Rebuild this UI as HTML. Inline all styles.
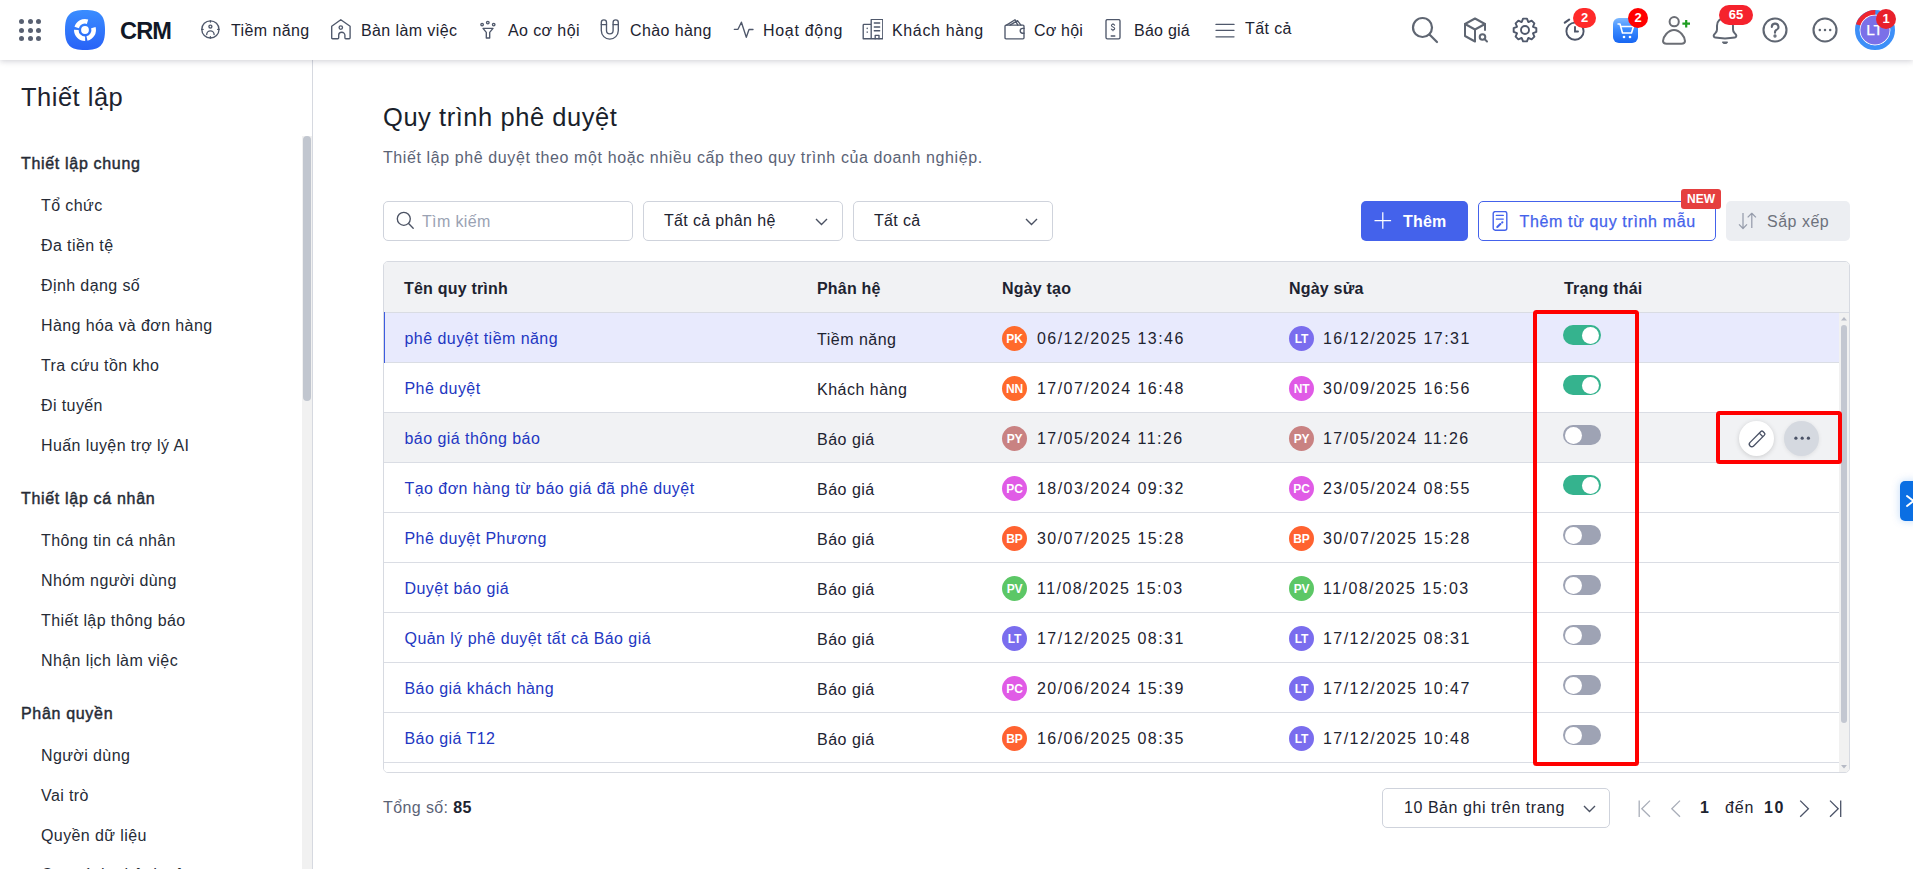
<!DOCTYPE html>
<html><head><meta charset="utf-8">
<style>
*{box-sizing:border-box;margin:0;padding:0}
html,body{width:1913px;height:869px;overflow:hidden;background:#fff;font-family:"Liberation Sans",sans-serif;color:#1d2330}
.abs{position:absolute}
#hdr{position:absolute;left:0;top:0;width:1913px;height:60px;background:#fff;z-index:5;box-shadow:0 1px 6px rgba(20,20,45,.21)}
.dot{position:absolute;width:5px;height:5px;border-radius:50%;background:#586071}
.nav{position:absolute;top:0;height:60px;line-height:60px;font-size:16px;letter-spacing:.4px;color:#1d2330;white-space:nowrap}
.nav svg{position:absolute;top:19px;left:0}
.nav span{position:absolute;left:30px;top:1px}
.ri{position:absolute}
.badge{position:absolute;background:#f5222d;color:#fff;font-weight:700;font-size:13px;text-align:center;border-radius:10px;height:20px;line-height:20px}
#side{position:absolute;left:0;top:60px;width:313px;height:809px;border-right:1px solid #d6d9e0;background:#fff}
.sh{position:absolute;left:21px;margin-top:1px;font-size:16px;font-weight:400;-webkit-text-stroke:.45px #262b36;color:#262b36;white-space:nowrap;letter-spacing:.68px}
.si{position:absolute;left:41px;margin-top:1px;font-size:16px;color:#262b36;white-space:nowrap;letter-spacing:.4px}
.t{position:absolute;white-space:nowrap}

.row{position:absolute;left:0;width:1455px;height:50px;border-bottom:1px solid #dadde4}
.selbar{position:absolute;left:-1px;top:-1px;width:2px;height:51px;background:#3d5ce0}
.cn{position:absolute;left:20.5px;top:1px;line-height:50px;font-size:16px;color:#2337c2;letter-spacing:.45px;white-space:nowrap}
.cm{position:absolute;left:433px;top:1.5px;line-height:50px;font-size:16px;color:#1d2330;letter-spacing:.5px;white-space:nowrap}
.cd{position:absolute;top:1px;line-height:50px;font-size:16px;color:#1d2330;letter-spacing:1.45px;white-space:nowrap}
.av{position:absolute;top:13px;width:25px;height:25px;border-radius:50%;color:#fff;font-size:12px;font-weight:700;text-align:center;line-height:26.5px;letter-spacing:-.2px}
.tg{position:absolute;left:1179px;top:12px;width:38px;height:20px;border-radius:10px;background:#9ea3b4}
.tg i{position:absolute;left:2px;top:1.5px;width:17px;height:17px;border-radius:50%;background:#fff}
.tg.on{background:#35b38e}
.tg.on i{left:19px}
.abtn{position:absolute;top:8px;width:35px;height:35px;border-radius:50%;}
.abtn svg{position:absolute}
.th{position:absolute;top:1.5px;line-height:50px;font-size:16px;font-weight:700;color:#1d2330;white-space:nowrap;letter-spacing:.2px}
</style></head><body>
<div id="hdr">
  <!-- dots -->
  <div class="dot" style="left:19px;top:19px"></div><div class="dot" style="left:27.5px;top:19px"></div><div class="dot" style="left:36px;top:19px"></div>
  <div class="dot" style="left:19px;top:27.5px"></div><div class="dot" style="left:27.5px;top:27.5px"></div><div class="dot" style="left:36px;top:27.5px"></div>
  <div class="dot" style="left:19px;top:36px"></div><div class="dot" style="left:27.5px;top:36px"></div><div class="dot" style="left:36px;top:36px"></div>
  <!-- logo -->
  <svg class="abs" style="left:65px;top:10px" width="40" height="40" viewBox="0 0 40 40">
    <defs><linearGradient id="lg" x1="0" y1="0" x2="0" y2="1"><stop offset="0" stop-color="#3a8dff"/><stop offset="1" stop-color="#2862f7"/></linearGradient></defs>
    <path d="M20 0C35 0 40 5 40 20S35 40 20 40 0 35 0 20 5 0 20 0Z" fill="url(#lg)"/>
    <circle cx="20" cy="20" r="3.9" fill="#fff"/>
    <path d="M9.48 16.78A11.0 11.0 0 0 1 23.22 9.48L21.87 13.88A6.4 6.4 0 0 0 13.88 18.13ZM20.19 31.00A11.0 11.0 0 0 1 9.00 19.81L13.60 19.89A6.4 6.4 0 0 0 20.11 26.40ZM30.57 16.97A11.0 11.0 0 0 1 22.47 30.72L21.44 26.24A6.4 6.4 0 0 0 26.15 18.24Z" fill="#fff"/>
  </svg>
  <div class="t" style="left:120px;top:17px;font-size:23.6px;font-weight:700;color:#111827;line-height:28px;letter-spacing:-.9px">CRM</div>

  <!-- nav -->
  <div class="nav" style="left:201px"><svg width="20" height="21" viewBox="0 0 20 21" fill="none" stroke="#4f586b" stroke-width="1.35" stroke-linejoin="round" stroke-linecap="round"><circle cx="9.4" cy="10.4" r="8.6"/><circle cx="9.4" cy="7.6" r="1.5"/><path d="M5.7 15.6a3.7 3.7 0 0 1 7.4 0"/><path d="M9.4 1.8v1.3M9.4 17.7v1.3M.8 10.4h1.3M16.7 10.4h1.3"/></svg><span>Tiềm năng</span></div>
  <div class="nav" style="left:331px"><svg width="21" height="21" viewBox="0 0 21 21" fill="none" stroke="#4f586b" stroke-width="1.35" stroke-linejoin="round" stroke-linecap="round"><path d="M.7 7.3L9.8.7l9.3 6.6v11.5c0 .6-.3.9-.9.9h-3.4c-.6 0-.9-.3-.9-.9v-2.5a3.1 3.1 0 0 0-6.2 0v2.5c0 .6-.3.9-.9.9H1.6c-.6 0-.9-.3-.9-.9z"/><circle cx="9.8" cy="8.6" r="1.7"/></svg><span>Bàn làm việc</span></div>
  <div class="nav" style="left:478px"><svg width="20" height="21" viewBox="0 0 20 21" fill="none" stroke="#4f586b" stroke-width="1.35" stroke-linejoin="round" stroke-linecap="round"><circle cx="4.1" cy="5.6" r="1.25"/><circle cx="9.8" cy="3.6" r="1.3"/><circle cx="15.7" cy="5.6" r="1.25"/><path d="M5 9.4h10l-3.3 4v5.6h-3.4v-5.6z"/></svg><span>Ao cơ hội</span></div>
  <div class="nav" style="left:600px"><svg width="20" height="21" viewBox="0 0 20 21" fill="none" stroke="#4f586b" stroke-width="1.35" stroke-linejoin="round" stroke-linecap="round"><path d="M1.3 3.4a2.6 2.6 0 0 1 5.2 0v8.2a3.3 3.3 0 0 0 6.6 0V3.4a2.6 2.6 0 0 1 5.2 0v8.2a8.5 8.5 0 0 1-17 0z"/><path d="M1.3 5.6h5.2M13.1 5.6h5.2"/></svg><span>Chào hàng</span></div>
  <div class="nav" style="left:733px"><svg width="21" height="21" viewBox="0 0 21 21" fill="none" stroke="#4f586b" stroke-width="1.35" stroke-linejoin="round" stroke-linecap="round"><path d="M1.3 10.3H5L8.4 3.2l4.9 15.1 2.7-7.8h4"/></svg><span style="letter-spacing:.7px;">Hoạt động</span></div>
  <div class="nav" style="left:862px"><svg width="21" height="21" viewBox="0 0 21 21" fill="none" stroke="#4f586b" stroke-width="1.35" stroke-linejoin="round" stroke-linecap="round"><path d="M9.2 19.7V5.4H2c-.5 0-.8.3-.8.8v13.5zM9.2 19.7V1c0-.5.3-.8.8-.8h10c.5 0 .8.3.8.8v18.7zM1.2 19.7h19.6"/><path d="M12.3 4h5.4M12.3 8h5.4M12.3 11.7h5.4M5.2 9.2v.4M5.2 12.9v.4M13.2 19.7v-3.4h3.8v3.4"/></svg><span style="letter-spacing:.65px;">Khách hàng</span></div>
  <div class="nav" style="left:1004px"><svg width="21" height="21" viewBox="0 0 21 21" fill="none" stroke="#4f586b" stroke-width="1.35" stroke-linejoin="round" stroke-linecap="round"><path d="M1 7.2c0-.7.4-1.1 1.1-1.1h16.8c.7 0 1.1.4 1.1 1.1v11.5c0 .7-.4 1.1-1.1 1.1H2.1c-.7 0-1.1-.4-1.1-1.1z"/><path d="M2.5 6.1L11 .7l2.8 5.4M6 6.1l7.5-4.4 3.4 4.4"/><path d="M20 9.4h-1.4a2.2 2.2 0 0 0 0 4.8H20"/></svg><span style="letter-spacing:.2px;">Cơ hội</span></div>
  <div class="nav" style="left:1104px"><svg width="20" height="21" viewBox="0 0 20 21" fill="none" stroke="#4f586b" stroke-width="1.35" stroke-linejoin="round" stroke-linecap="round"><rect x="2" y=".6" width="14" height="19.2" rx="1.4"/><path d="M7.2 17h3.6"/><path d="M10.6 6.2c-.3-.6-.9-.9-1.6-.9-.9 0-1.6.5-1.6 1.3 0 1.8 3.3 1 3.3 3 0 .8-.7 1.3-1.7 1.3-.7 0-1.4-.3-1.7-.9M9 4.5v.8M9 11v.8" stroke-width="1.1"/></svg><span style="letter-spacing:.25px;">Báo giá</span></div>
  <div class="nav" style="left:1215px"><svg width="20" height="21" viewBox="0 0 20 21" fill="none" stroke="#4f586b" stroke-width="1.35" stroke-linejoin="round" stroke-linecap="round"><path d="M1 5.4h18M1 11.3h18M1 17.8h18"/></svg><span style="letter-spacing:.4px;top:-1px;">Tất cả</span></div>

  <!-- right icons -->
  <svg class="ri" style="left:1411px;top:16px" width="28" height="28" viewBox="0 0 28 28" fill="none" stroke="#5f6672" stroke-width="2.2" stroke-linecap="round"><circle cx="11.5" cy="11.5" r="9.5"/><path d="M18.5 18.5l7.5 7.5"/></svg>
  <svg class="ri" style="left:1462px;top:16px" width="28" height="28" viewBox="0 0 28 28" fill="none" stroke="#5f6672" stroke-width="2" stroke-linejoin="round" stroke-linecap="round"><path d="M23 14V8L13 2.5 3 8v12l10 5.5"/><path d="M3 8l10 5.5L23 8M13 13.5V25"/><circle cx="20.5" cy="21" r="2.8"/><path d="M22.5 23l2.5 2.5"/></svg>
  <svg class="ri" style="left:1511px;top:16px" width="28" height="28" viewBox="0 0 28 28" fill="none" stroke="#4f586b" stroke-width="1.9" stroke-linejoin="round"><path d="M10.77 5.92 L12.05 2.67 L15.95 2.67 L17.23 5.92 L17.43 6.01 L20.64 4.61 L23.39 7.36 L21.99 10.57 L22.08 10.77 L25.33 12.05 L25.33 15.95 L22.08 17.23 L21.99 17.43 L23.39 20.64 L20.64 23.39 L17.43 21.99 L17.23 22.08 L15.95 25.33 L12.05 25.33 L10.77 22.08 L10.57 21.99 L7.36 23.39 L4.61 20.64 L6.01 17.43 L5.92 17.23 L2.67 15.95 L2.67 12.05 L5.92 10.77 L6.01 10.57 L4.61 7.36 L7.36 4.61 L10.57 6.01Z"/><circle cx="14" cy="14" r="4"/></svg>
  <svg class="ri" style="left:1561px;top:16px" width="28" height="28" viewBox="0 0 28 28" fill="none" stroke="#4d5568" stroke-width="1.9" stroke-linecap="round"><circle cx="14" cy="15.2" r="8.6"/><path d="M14 10.9v4.6h3"/><path d="M3.8 6.6l4.3-2.9" stroke-width="2.2"/></svg>
  <div class="badge" style="left:1573px;top:8px;width:23px;background:#ff2a2a">2</div>
  <svg class="ri" style="left:1613px;top:18px" width="25" height="25" viewBox="0 0 25 25"><defs><linearGradient id="cg" x1="0" y1="0" x2="0" y2="1"><stop offset="0" stop-color="#7db8ff"/><stop offset=".45" stop-color="#3b8bff"/><stop offset="1" stop-color="#1766f2"/></linearGradient></defs><rect width="25" height="25" rx="6" fill="url(#cg)"/><path d="M4.5 6h2.5l2.5 9h9l2-6.5H8" fill="none" stroke="#fff" stroke-width="1.6" stroke-linejoin="round"/><circle cx="11" cy="19" r="1.3" fill="#fff"/><circle cx="17" cy="19" r="1.3" fill="#fff"/></svg>
  <div class="badge" style="left:1628px;top:8px;width:20px;background:#f00">2</div>
  <svg class="ri" style="left:1660px;top:15px" width="32" height="30" viewBox="0 0 32 30" fill="none" stroke="#6b6e75" stroke-width="2"><circle cx="14.2" cy="6.7" r="4.6"/><path d="M3 26c0-4 5-11 11-11s11 7 11 11c0 1.7-1.2 2.7-3.5 2.7h-15C4.2 28.7 3 27.7 3 26z" stroke-linejoin="round"/><path d="M26.2 5v7.5M22.4 8.7h7.6" stroke="#1f9d22" stroke-width="2.2"/></svg>
  <svg class="ri" style="left:1711px;top:15px" width="28" height="30" viewBox="0 0 28 30" fill="none" stroke="#5f6672" stroke-width="2" stroke-linejoin="round"><path d="M14 3.2c-5 0-8 3-8 7.6v3.8c0 1.3-.5 2.3-1.4 3.3l-1.5 1.7c-.9 1.1-.3 2.7 1.2 3 2.6.5 6 .8 9.7.8s7.1-.3 9.7-.8c1.5-.3 2.1-1.9 1.2-3l-1.5-1.7c-.9-1-1.4-2-1.4-3.3v-3.8c0-4.6-3-7.6-8-7.6z"/><path d="M11.6 27.2c.5.9 1.3 1.3 2.4 1.3s1.9-.4 2.4-1.3z" fill="#5f6672" stroke-width="1.2"/></svg>
  <div class="badge" style="left:1719px;top:5px;width:34px;font-size:13px">65</div>
  <svg class="ri" style="left:1761px;top:16px" width="28" height="28" viewBox="0 0 28 28" fill="none" stroke="#5f6672" stroke-width="2.1" stroke-linecap="round"><circle cx="14" cy="14" r="11.5"/><path d="M10.8 11a3.3 3.3 0 1 1 4.5 3c-1 .5-1.3 1-1.3 2v.8"/><circle cx="14" cy="20" r=".6" fill="#5f6672"/></svg>
  <svg class="ri" style="left:1811px;top:16px" width="28" height="28" viewBox="0 0 28 28" fill="none" stroke="#5f6672" stroke-width="2.1"><circle cx="14" cy="14" r="11.5"/><circle cx="8.8" cy="14" r="1.25" fill="#5f6672" stroke="none"/><circle cx="14" cy="14" r="1.25" fill="#5f6672" stroke="none"/><circle cx="19.2" cy="14" r="1.25" fill="#5f6672" stroke="none"/></svg>
  <svg class="ri" style="left:1855px;top:10px" width="40" height="40" viewBox="0 0 40 40"><circle cx="20" cy="20" r="17.6" fill="none" stroke="#3d8ff8" stroke-width="4.8"/><path d="M3.26 14.88A17.5 17.5 0 0 1 20.31 2.50" fill="none" stroke="#ee2631" stroke-width="4.8"/><circle cx="20" cy="20" r="15.3" fill="#fff"/><circle cx="20" cy="20" r="14.6" fill="#7b70e8"/><text x="19.6" y="25.2" font-size="15.5" fill="#fff" text-anchor="middle" font-family="Liberation Sans" letter-spacing="-.2" stroke="#fff" stroke-width=".25">LT</text></svg>
  <div class="badge" style="left:1876px;top:9px;width:20px;background:#e8202b">1</div>
</div>

<div id="side">
  <div class="t" style="left:21px;top:21px;font-size:25.5px;color:#1d2330;line-height:32px;letter-spacing:.5px">Thiết lập</div>
  <!-- scrollbar -->
  <div class="abs" style="left:302px;top:76px;width:10px;height:733px;background:#f1f1f1"></div>
  <div class="abs" style="left:303px;top:76px;width:8px;height:265px;background:#c1c6cf;border-radius:4px"></div>
  <div class="sh" style="top:93px;line-height:20px">Thiết lập chung</div>
  <div class="si" style="top:135px;line-height:20px">Tổ chức</div>
  <div class="si" style="top:175px;line-height:20px">Đa tiền tệ</div>
  <div class="si" style="top:215px;line-height:20px">Định dạng số</div>
  <div class="si" style="top:255px;line-height:20px">Hàng hóa và đơn hàng</div>
  <div class="si" style="top:295px;line-height:20px">Tra cứu tồn kho</div>
  <div class="si" style="top:335px;line-height:20px">Đi tuyến</div>
  <div class="si" style="top:375px;line-height:20px">Huấn luyện trợ lý AI</div>
  <div class="sh" style="top:428px;line-height:20px">Thiết lập cá nhân</div>
  <div class="si" style="top:470px;line-height:20px">Thông tin cá nhân</div>
  <div class="si" style="top:510px;line-height:20px">Nhóm người dùng</div>
  <div class="si" style="top:550px;line-height:20px">Thiết lập thông báo</div>
  <div class="si" style="top:590px;line-height:20px">Nhận lịch làm việc</div>
  <div class="sh" style="top:643px;line-height:20px">Phân quyền</div>
  <div class="si" style="top:685px;line-height:20px">Người dùng</div>
  <div class="si" style="top:725px;line-height:20px">Vai trò</div>
  <div class="si" style="top:765px;line-height:20px">Quyền dữ liệu</div>
  <div class="si" style="top:804px;line-height:20px">Quy trình phê duyệt</div>
</div>

<!-- MAIN -->

<div class="t" style="left:383px;top:101px;font-size:25.5px;line-height:32px;color:#1a1f2b;letter-spacing:.55px">Quy trình phê duyệt</div>
<div class="t" style="left:383px;top:148.3px;font-size:16px;line-height:20px;color:#5b6376;letter-spacing:.6px">Thiết lập phê duyệt theo một hoặc nhiều cấp theo quy trình của doanh nghiệp.</div>

<!-- search -->
<div class="abs" style="left:383px;top:201px;width:250px;height:40px;border:1px solid #cfd3dc;border-radius:5px;background:#fff">
  <svg class="abs" style="left:12px;top:9px" width="20" height="20" viewBox="0 0 20 20" fill="none" stroke="#4b5263" stroke-width="1.35" stroke-linecap="round"><circle cx="7.8" cy="7.8" r="6.5"/><path d="M12.6 12.6l4.6 4.6"/></svg>
  <div class="t" style="left:38px;top:10px;line-height:20px;font-size:16px;color:#9aa2b3;letter-spacing:.35px">Tìm kiếm</div>
</div>
<div class="abs" style="left:643px;top:201px;width:200px;height:40px;border:1px solid #cfd3dc;border-radius:5px;background:#fff">
  <div class="t" style="left:20px;top:8.6px;line-height:20px;font-size:16px;color:#1d2330;letter-spacing:.35px">Tất cả phân hệ</div>
  <svg class="abs" style="left:171px;top:16px" width="13" height="8" viewBox="0 0 13 8" fill="none" stroke="#4b5263" stroke-width="1.4"><path d="M1 1l5.5 5.5L12 1"/></svg>
</div>
<div class="abs" style="left:853px;top:201px;width:200px;height:40px;border:1px solid #cfd3dc;border-radius:5px;background:#fff">
  <div class="t" style="left:20px;top:8.6px;line-height:20px;font-size:16px;color:#1d2330;letter-spacing:.35px">Tất cả</div>
  <svg class="abs" style="left:171px;top:16px" width="13" height="8" viewBox="0 0 13 8" fill="none" stroke="#4b5263" stroke-width="1.4"><path d="M1 1l5.5 5.5L12 1"/></svg>
</div>

<!-- buttons -->
<div class="abs" style="left:1361px;top:201px;width:107px;height:40px;border-radius:5px;background:#4462eb">
  <svg class="abs" style="left:13px;top:11px" width="18" height="18" viewBox="0 0 18 18" stroke="#fff" stroke-width="1.25"><path d="M8.8 0.2v16.6M0.5 8.5h16.6"/></svg>
  <div class="t" style="left:42px;top:11px;line-height:20px;font-size:16px;font-weight:700;color:#fff;letter-spacing:.2px">Thêm</div>
</div>
<div class="abs" style="left:1478px;top:201px;width:238px;height:40px;border:1.5px solid #4462eb;border-radius:5px;background:#fff">
  <svg class="abs" style="left:13px;top:9px" width="18" height="21" viewBox="0 0 18 21" fill="none" stroke="#4462eb" stroke-width="1.4" stroke-linejoin="round" stroke-linecap="round"><rect x="1.2" y="0.6" width="13.6" height="18.6" rx="2"/><path d="M4.3 4.4h7M4.3 8.1h7" stroke-width="1.3"/><path d="M5.3 16L8.4 13" stroke-width="2.1"/><path d="M10.2 11.5l.2-.2" stroke-width="2.1"/></svg>
  <div class="t" style="left:40.5px;top:9.5px;line-height:20px;font-size:16px;color:#4462eb;letter-spacing:.64px;-webkit-text-stroke:.25px #4462eb">Thêm từ quy trình mẫu</div>
</div>
<div class="abs" style="left:1681px;top:189px;width:40px;height:20px;border-radius:3px;background:#e53f3f;color:#fff;font-size:12px;font-weight:700;text-align:center;line-height:20px">NEW</div>
<div class="abs" style="left:1726px;top:201px;width:124px;height:40px;border-radius:5px;background:#eceef2">
  <svg class="abs" style="left:12px;top:11px" width="19" height="18" viewBox="0 0 19 18" fill="none" stroke="#979dac" stroke-width="1.25" stroke-linejoin="round"><path d="M5 1v15.5M1 12.4l4 4.1 4-4.1M13.8 16V1.3M9.7 5.4l4.1-4.1 4.1 4.1"/></svg>
  <div class="t" style="left:41px;top:11px;line-height:20px;font-size:16px;color:#6e727d;letter-spacing:.5px">Sắp xếp</div>
</div>

<!-- table -->
<div class="abs" style="left:383px;top:261px;width:1467px;height:512px;border:1px solid #d7dae1;border-radius:5px;overflow:hidden;background:#fff">
  <div class="abs" style="left:0;top:0;width:1465px;height:51px;background:#f1f2f4;border-bottom:1px solid #d9dce3">
    <div class="th" style="left:20px">Tên quy trình</div>
    <div class="th" style="left:433px">Phân hệ</div>
    <div class="th" style="left:618px">Ngày tạo</div>
    <div class="th" style="left:905px">Ngày sửa</div>
    <div class="th" style="left:1180px">Trạng thái</div>
  </div>
<div class="row" style="top:51px;background:#e8eafd">
<div class="selbar"></div>
<div class="cn">phê duyệt tiềm năng</div><div class="cm">Tiềm năng</div>
<div class="av" style="left:618px;background:#ff6a2c">PK</div><div class="cd" style="left:653px">06/12/2025 13:46</div>
<div class="av" style="left:905px;background:#7a6dee">LT</div><div class="cd" style="left:939px">16/12/2025 17:31</div>
<div class="tg on"><i></i></div>
</div>
<div class="row" style="top:101px;background:#fff">
<div class="cn">Phê duyệt</div><div class="cm">Khách hàng</div>
<div class="av" style="left:618px;background:#ff6a2c">NN</div><div class="cd" style="left:653px">17/07/2024 16:48</div>
<div class="av" style="left:905px;background:#e05ae6">NT</div><div class="cd" style="left:939px">30/09/2025 16:56</div>
<div class="tg on"><i></i></div>
</div>
<div class="row" style="top:151px;background:#f1f2f4">
<div class="cn">báo giá thông báo</div><div class="cm">Báo giá</div>
<div class="av" style="left:618px;background:#c98282">PY</div><div class="cd" style="left:653px">17/05/2024 11:26</div>
<div class="av" style="left:905px;background:#c98282">PY</div><div class="cd" style="left:939px">17/05/2024 11:26</div>
<div class="tg "><i></i></div>
<div class="abtn" style="left:1355px;background:#fff;box-shadow:0 1px 5px rgba(0,0,0,.16)"><svg style="left:5.5px;top:5.5px" width="24" height="24" viewBox="0 0 24 24" fill="none" stroke="#4b5367" stroke-width="1.35" stroke-linejoin="round"><g transform="rotate(-45 12 12)"><path d="M4.7 9.5H20a1.5 1.5 0 0 1 1.5 1.5v2a1.5 1.5 0 0 1-1.5 1.5H4.7a2.5 2.5 0 0 1 0-5z"/><path d="M17.8 9.5v5"/></g></svg></div><div class="abtn" style="left:1400px;background:#d5d9e0;box-shadow:0 1px 4px rgba(0,0,0,.08)"><svg style="left:7.5px;top:7.5px" width="20" height="20" viewBox="0 0 20 20" fill="#4b5367"><circle cx="3.9" cy="9.2" r="1.6"/><circle cx="10.2" cy="9.2" r="1.6"/><circle cx="16.4" cy="9.2" r="1.6"/></svg></div>
</div>
<div class="row" style="top:201px;background:#fff">
<div class="cn">Tạo đơn hàng từ báo giá đã phê duyệt</div><div class="cm">Báo giá</div>
<div class="av" style="left:618px;background:#e05be6">PC</div><div class="cd" style="left:653px">18/03/2024 09:32</div>
<div class="av" style="left:905px;background:#e05be6">PC</div><div class="cd" style="left:939px">23/05/2024 08:55</div>
<div class="tg on"><i></i></div>
</div>
<div class="row" style="top:251px;background:#fff">
<div class="cn">Phê duyệt Phương</div><div class="cm">Báo giá</div>
<div class="av" style="left:618px;background:#ff6230">BP</div><div class="cd" style="left:653px">30/07/2025 15:28</div>
<div class="av" style="left:905px;background:#ff6230">BP</div><div class="cd" style="left:939px">30/07/2025 15:28</div>
<div class="tg "><i></i></div>
</div>
<div class="row" style="top:301px;background:#fff">
<div class="cn">Duyệt báo giá</div><div class="cm">Báo giá</div>
<div class="av" style="left:618px;background:#5cc766">PV</div><div class="cd" style="left:653px">11/08/2025 15:03</div>
<div class="av" style="left:905px;background:#5cc766">PV</div><div class="cd" style="left:939px">11/08/2025 15:03</div>
<div class="tg "><i></i></div>
</div>
<div class="row" style="top:351px;background:#fff">
<div class="cn">Quản lý phê duyệt tất cả Báo giá</div><div class="cm">Báo giá</div>
<div class="av" style="left:618px;background:#7a6dee">LT</div><div class="cd" style="left:653px">17/12/2025 08:31</div>
<div class="av" style="left:905px;background:#7a6dee">LT</div><div class="cd" style="left:939px">17/12/2025 08:31</div>
<div class="tg "><i></i></div>
</div>
<div class="row" style="top:401px;background:#fff">
<div class="cn">Báo giá khách hàng</div><div class="cm">Báo giá</div>
<div class="av" style="left:618px;background:#e05be6">PC</div><div class="cd" style="left:653px">20/06/2024 15:39</div>
<div class="av" style="left:905px;background:#7a6dee">LT</div><div class="cd" style="left:939px">17/12/2025 10:47</div>
<div class="tg "><i></i></div>
</div>
<div class="row" style="top:451px;background:#fff">
<div class="cn">Báo giá T12</div><div class="cm">Báo giá</div>
<div class="av" style="left:618px;background:#ff6230">BP</div><div class="cd" style="left:653px">16/06/2025 08:35</div>
<div class="av" style="left:905px;background:#7a6dee">LT</div><div class="cd" style="left:939px">17/12/2025 10:48</div>
<div class="tg "><i></i></div>
</div>
<div class="row" style="top:501px;background:#fff">
<div class="cn">Báo giá mới</div><div class="cm">Báo giá</div>
<div class="av" style="left:618px;background:#7a6dee">LT</div><div class="cd" style="left:653px">17/12/2025 10:50</div>
<div class="av" style="left:905px;background:#7a6dee">LT</div><div class="cd" style="left:939px">17/12/2025 10:50</div>
<div class="tg "><i></i></div>
</div>
  <!-- scrollbar -->
  <div class="abs" style="left:1455px;top:51px;width:10px;height:460px;background:#f1f1f1"></div>
  <div class="abs" style="left:1457px;top:63px;width:6px;height:398px;background:#c3c7d1;border-radius:3px"></div>
  <svg class="abs" style="left:1457px;top:55px" width="6" height="4" viewBox="0 0 6 4"><path d="M0 3.6L3 0 6 3.6z" fill="#b6bac5"/></svg>
  <svg class="abs" style="left:1457px;top:503px" width="6" height="4" viewBox="0 0 6 4"><path d="M0 0L3 3.6 6 0z" fill="#b6bac5"/></svg>
</div>

<!-- red highlight boxes -->
<div class="abs" style="left:1533px;top:310px;width:106px;height:456px;border:4px solid #f00;border-radius:3.5px"></div>
<div class="abs" style="left:1716px;top:411px;width:126px;height:53px;border:4px solid #f00;border-radius:3.5px"></div>

<!-- footer -->
<div class="t" style="left:383px;top:798px;line-height:20px;font-size:16px;color:#5b6376;letter-spacing:.4px">Tổng số: <b style="color:#1d2330">85</b></div>
<div class="abs" style="left:1382px;top:788px;width:228px;height:40px;border:1px solid #cfd3dc;border-radius:5px;background:#fff">
  <div class="t" style="left:21px;top:9px;line-height:20px;font-size:16px;color:#1d2330;letter-spacing:.55px">10 Bản ghi trên trang</div>
  <svg class="abs" style="left:200px;top:16px" width="13" height="8" viewBox="0 0 13 8" fill="none" stroke="#4b5263" stroke-width="1.4"><path d="M1 1l5.5 5.5L12 1"/></svg>
</div>
<svg class="abs" style="left:1636px;top:799px" width="16" height="20" viewBox="0 0 16 20" fill="none" stroke="#a9aeb9" stroke-width="1.3"><path d="M3.2 1.4v16.6M14 1.6L5.8 9.7 14 17.8"/></svg>
<svg class="abs" style="left:1668px;top:799px" width="14" height="20" viewBox="0 0 14 20" fill="none" stroke="#a9aeb9" stroke-width="1.3"><path d="M12 1.6L3.8 9.7 12 17.8"/></svg>
<div class="t" style="left:1700px;top:798px;line-height:20px;font-size:16px;font-weight:700;color:#1d2330">1</div>
<div class="t" style="left:1725px;top:798px;line-height:20px;font-size:16px;color:#1d2330;letter-spacing:.9px">đến</div>
<div class="t" style="left:1764px;top:798px;line-height:20px;font-size:16px;font-weight:700;color:#1d2330;letter-spacing:1.6px">10</div>
<svg class="abs" style="left:1798px;top:799px" width="14" height="20" viewBox="0 0 14 20" fill="none" stroke="#4b5367" stroke-width="1.3"><path d="M2.2 1.6l8.2 8.1-8.2 8.1"/></svg>
<svg class="abs" style="left:1828px;top:799px" width="16" height="20" viewBox="0 0 16 20" fill="none" stroke="#4b5367" stroke-width="1.3"><path d="M12.7 1.4v16.6M2 1.6l8.2 8.1L2 17.8"/></svg>

<!-- right tab -->
<div class="abs" style="left:1900px;top:481px;width:20px;height:40px;border-radius:5px;background:#0b6fe3;box-shadow:0 0 8px rgba(11,111,227,.25)">
  <svg class="abs" style="left:5px;top:12px" width="12" height="16" viewBox="0 0 12 16" fill="none" stroke="#fff" stroke-width="2" stroke-linecap="round"><path d="M2 3l6.5 5L2 13"/></svg>
</div>

</body></html>
